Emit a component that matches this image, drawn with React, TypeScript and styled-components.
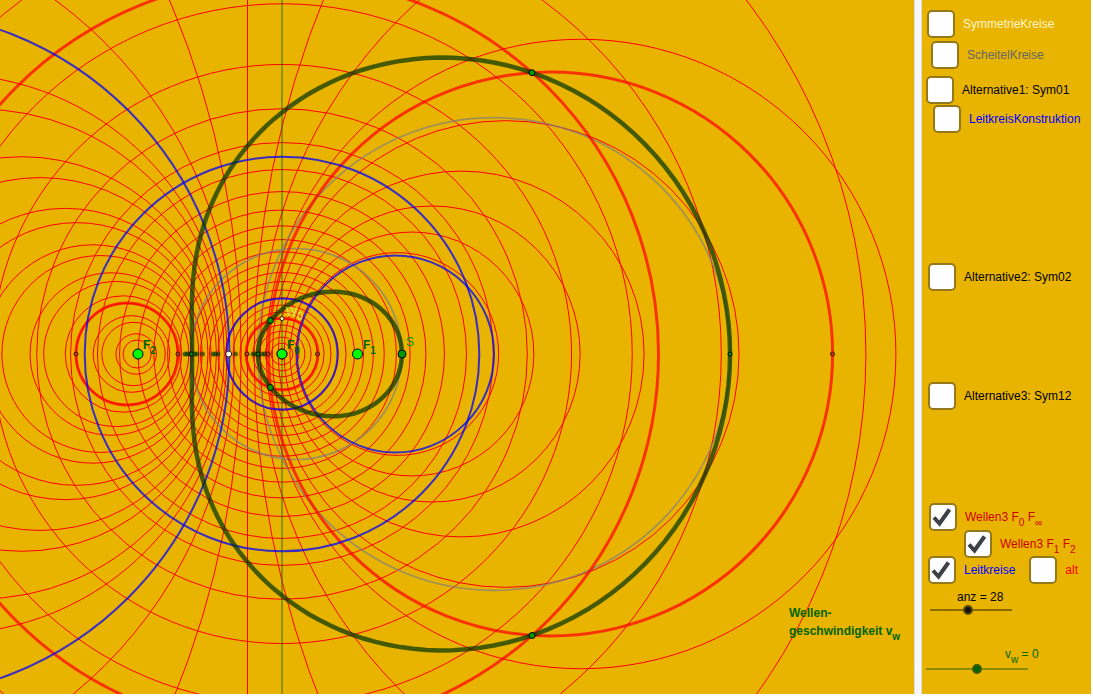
import React from "react";
import styled, { createGlobalStyle } from "styled-components";

const GlobalStyle = createGlobalStyle`
  *, *::before, *::after { box-sizing: border-box; }
  body { margin: 0; background: #ffffff; font: 12px/18px "Liberation Sans", Arial, sans-serif; }
`;

const Page = styled.main`
  display: grid;
  grid-template-columns: minmax(0, 1fr) 8px 169px;
  min-height: 100vh;
  padding: 0 2px 2px 0;
`;

const Plot = styled.section`
  position: relative;
  overflow: hidden;
  background: #e8b400;
`;

const Drawing = styled.svg`
  position: absolute;
  inset: 0;
  display: block;
  width: 100%;
  height: 100%;
  font-family: "Liberation Sans", Arial, sans-serif;
`;

const Divider = styled.div`
  background: #f8f8f8;
  border: solid #dddddd;
  border-width: 0 1px;
`;

const Panel = styled.form`
  display: flex;
  flex-direction: column;
  background: #e8b400;
  overflow: hidden;
`;

const Row = styled.div<{ $indent: number; $before: number }>`
  display: flex;
  flex: none;
  align-items: flex-start;
  gap: 14px;
  height: 27px;
  margin-top: ${(p) => p.$before}px;
  padding-left: ${(p) => p.$indent}px;
`;

const Option = styled.label<{ $color: string }>`
  display: flex;
  align-items: center;
  gap: 8px;
  color: ${(p) => p.$color};
  white-space: nowrap;
`;

const BoxWrap = styled.span`
  position: relative;
  display: block;
  width: 28px;
  height: 28px;
`;

const Box = styled.input`
  appearance: none;
  display: block;
  width: 28px;
  height: 28px;
  margin: 0;
  background: #ffffff;
  border: 2px solid #93791c;
  border-radius: 5px;
  & + svg { display: none; }
  &:checked + svg { display: block; }
`;

const Tick = styled.svg`
  position: absolute;
  inset: 0;
  pointer-events: none;
`;

const Sub = styled.sub`
  font-size: 10px;
  line-height: 0;
  vertical-align: -5px;
`;

const SliderLabel = styled.label<{ $indent: number; $before: number; $color: string }>`
  margin-top: ${(p) => p.$before}px;
  padding-left: ${(p) => p.$indent}px;
  color: ${(p) => p.$color};
`;

const Slider = styled.input<{ $width: number; $indent: number; $before: number; $track: string; $thumb: string; $ring: string }>`
  appearance: none;
  flex: none;
  width: ${(p) => p.$width}px;
  height: 10px;
  margin: ${(p) => p.$before}px 0 0 ${(p) => p.$indent}px;
  background: transparent;
  &::-webkit-slider-runnable-track {
    height: 2px;
    background: ${(p) => p.$track};
  }
  &::-webkit-slider-thumb {
    appearance: none;
    width: 10px;
    height: 10px;
    margin-top: -4px;
    border: 2px solid ${(p) => p.$ring};
    border-radius: 50%;
    background: ${(p) => p.$thumb};
  }
`;

const RAD = Math.PI / 180;
const STEP = 90 / 28;
const COUNT = 28;
const AXIS = 354;
const F0 = 282;
const MID = 247.8;
const HALF = 109.8;
const RADIUS = 103.8;

const steps = Array.from({ length: COUNT }, (_, i) => i);

const waveRadii = steps.slice(0, 25).map((i) => RADIUS / Math.tan((10.08 + STEP * i) * RAD));

// Step 19 is the perpendicular bisector of F1 and F2, drawn as a straight line.
const apollonius = steps
  .filter((i) => i !== 19)
  .map((i) => {
    const t = 1.38 * Math.tan((-25.14 + STEP * i) * RAD);
    const q = 1 - t * t;
    return { cx: MID - (HALF * (1 + t * t)) / q, r: Math.abs((2 * HALF * t) / q) };
  });

function oval(shift: number) {
  const points: string[] = [];
  for (let deg = 0; deg < 360; deg += 2) {
    const p = 113.5 * Math.cos(deg * RAD) + shift;
    const rho = p + Math.sqrt(p * p + 10776);
    points.push(`${(F0 + rho * Math.cos(deg * RAD)).toFixed(2)},${(AXIS + rho * Math.sin(deg * RAD)).toFixed(2)}`);
  }
  return points.join(" ");
}

const INNER_OVAL = oval(-98.5);
const OUTER_OVAL = oval(98.5);

const marks = [185, 187, 189.5, 195, 197, 202.5, 213, 215.5, 218, 235.5, 253, 255, 262, 264.5];

function Figure() {
  return (
    <Drawing viewBox="0 0 914 694" preserveAspectRatio="xMidYMid slice" role="img" aria-label="Wellen">
      <g fill="none" stroke="#ff0000" strokeWidth="1">
        {waveRadii.map((r, i) => <circle key={i} cx={F0} cy={AXIS} r={r} />)}
        {apollonius.map((c, i) => <circle key={i} cx={c.cx} cy={AXIS} r={c.r} />)}
        <path d="M247.5 0V694" />
      </g>
      <path d="M282 0V694" stroke="#006400" strokeOpacity="0.4" strokeWidth="2" />
      <g fill="none" stroke="#808080" strokeOpacity="0.7" strokeWidth="1.7">
        <circle cx="296.3" cy={AXIS} r="105.5" />
        <circle cx="494" cy={AXIS} r="236.3" />
      </g>
      <g fill="none" stroke="#ff0000" strokeOpacity="0.72" strokeWidth="3">
        <circle cx={F0} cy={AXIS} r="36" />
        <circle cx={F0} cy={AXIS} r="376.5" />
        <circle cx="127" cy={AXIS} r="51" />
        <circle cx="550.6" cy={AXIS} r="282" />
      </g>
      <g fill="none" stroke="#0000ff" strokeOpacity="0.75" strokeWidth="2">
        <circle cx={F0} cy={AXIS} r="55.5" />
        <circle cx={F0} cy={AXIS} r="197.3" />
        <circle cx="395.5" cy={AXIS} r="98.5" />
        <circle cx="-114.5" cy={AXIS} r="343.9" />
      </g>
      <g fill="none" stroke="#003300" strokeOpacity="0.7" strokeWidth="4.5">
        <polygon points={INNER_OVAL} />
        <polygon points={OUTER_OVAL} />
      </g>
      <g fill="#003300" fillOpacity="0.6">
        {marks.map((x) => <circle key={x} cx={x} cy={AXIS} r="2.5" />)}
      </g>
      <g fill="#dd3311" stroke="#3c1400" strokeWidth="1">
        {[76, 178, 247, 268.3, 317.5, 832.5].map((x) => <circle key={x} cx={x} cy={AXIS} r="2" />)}
      </g>
      <g fill="#009900" stroke="#000000" strokeWidth="1">
        {[191.5, 258, 730].map((x) => <circle key={x} cx={x} cy={AXIS} r="2" />)}
        <circle cx="270.4" cy="320.5" r="3" />
        <circle cx="270.4" cy="387.5" r="3" />
        <circle cx="532" cy="72.7" r="3" />
        <circle cx="532" cy="635.5" r="3" />
        <circle cx="402" cy={AXIS} r="4" />
      </g>
      <g fill="#00ff00" stroke="#000000" strokeWidth="1">
        {[138, 282, 357.5].map((x) => <circle key={x} cx={x} cy={AXIS} r="5" />)}
      </g>
      <circle cx="228.7" cy={AXIS} r="3" fill="#fffbe8" stroke="#222222" />
      <circle cx="282" cy="318.6" r="2" fill="#ffff99" stroke="#222222" />
      <g fontSize="12" fontWeight="700" fill="#006400">
        <text x="143" y="349">F<tspan fontSize="10" dy="5">2</tspan></text>
        <text x="287" y="349">F<tspan fontSize="10" dy="5">0</tspan></text>
        <text x="363" y="349">F<tspan fontSize="10" dy="5">1</tspan></text>
        <text x="789" y="617">Wellen-</text>
        <text x="789" y="635">geschwindigkeit v<tspan fontSize="10" dy="5">w</tspan></text>
      </g>
      <text x="286" y="316" fontSize="12" fill="#dcea50">W<tspan fontSize="10" dy="4">0</tspan></text>
      <text x="406" y="346" fontSize="12" fill="#009900">S</text>
    </Drawing>
  );
}

function Check({ color, on, children }: { color: string; on?: boolean; children: React.ReactNode }) {
  return (
    <Option $color={color}>
      <BoxWrap>
        <Box type="checkbox" defaultChecked={on} />
        <Tick width="28" height="28" viewBox="0 0 28 28" fill="none" stroke="#3d4045" strokeWidth="4">
          <path d="M5 14.500L10.500 20.500L20.500 6.500" />
        </Tick>
      </BoxWrap>
      <span>{children}</span>
    </Option>
  );
}

export default function App() {
  return (
    <>
      <GlobalStyle />
      <Page>
        <Plot><Figure /></Plot>
        <Divider />
        <Panel>
          <Row $indent={5} $before={10}><Check color="#fff5c8">SymmetrieKreise</Check></Row>
          <Row $indent={9} $before={4}><Check color="#666666">ScheitelKreise</Check></Row>
          <Row $indent={4} $before={8}><Check color="#000000">Alternative1: Sym01</Check></Row>
          <Row $indent={11} $before={2}><Check color="#0000ff">LeitkreisKonstruktion</Check></Row>
          <Row $indent={6} $before={131}><Check color="#000000">Alternative2: Sym02</Check></Row>
          <Row $indent={6} $before={92}><Check color="#000000">Alternative3: Sym12</Check></Row>
          <Row $indent={7} $before={94}><Check color="#cc0000" on>Wellen3 F<Sub>0</Sub> F<Sub>∞</Sub></Check></Row>
          <Row $indent={42} $before={0}><Check color="#cc0000" on>Wellen3 F<Sub>1</Sub> F<Sub>2</Sub></Check></Row>
          <Row $indent={6} $before={-1}>
            <Check color="#0000ff" on>Leitkreise</Check>
            <Check color="#ff0000">alt</Check>
          </Row>
          <SliderLabel htmlFor="anz" $indent={35} $before={5} $color="#000000">anz = 28</SliderLabel>
          <Slider id="anz" type="range" min={1} max={60} defaultValue={28} $width={82} $indent={8} $before={-1}
            $track="#8b6c00" $thumb="#111111" $ring="#5a4a00" />
          <SliderLabel htmlFor="vw" $indent={83} $before={30} $color="#006400">v<Sub>w</Sub> = 0</SliderLabel>
          <Slider id="vw" type="range" min={-5} max={5} defaultValue={0} $width={102} $indent={4} $before={1}
            $track="#8b8b00" $thumb="#006400" $ring="#3c5a00" />
        </Panel>
      </Page>
    </>
  );
}
